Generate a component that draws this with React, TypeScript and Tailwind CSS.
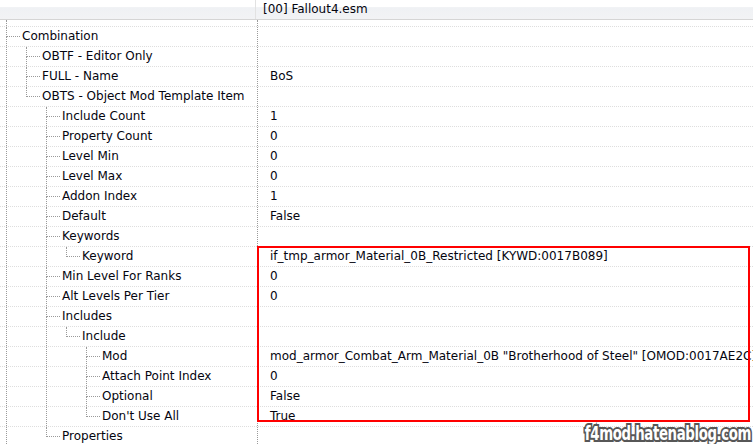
import React from "react";

type Node = {
  label: string;
  value?: string;
  depth: number;
  last: boolean;
};

const rows: Node[] = [
  { label: "Combination", depth: 0, last: false },
  { label: "OBTF - Editor Only", depth: 1, last: false },
  { label: "FULL - Name", value: "BoS", depth: 1, last: false },
  { label: "OBTS - Object Mod Template Item", depth: 1, last: true },
  { label: "Include Count", value: "1", depth: 2, last: false },
  { label: "Property Count", value: "0", depth: 2, last: false },
  { label: "Level Min", value: "0", depth: 2, last: false },
  { label: "Level Max", value: "0", depth: 2, last: false },
  { label: "Addon Index", value: "1", depth: 2, last: false },
  { label: "Default", value: "False", depth: 2, last: false },
  { label: "Keywords", depth: 2, last: false },
  { label: "Keyword", value: "if_tmp_armor_Material_0B_Restricted [KYWD:0017B089]", depth: 3, last: true },
  { label: "Min Level For Ranks", value: "0", depth: 2, last: false },
  { label: "Alt Levels Per Tier", value: "0", depth: 2, last: false },
  { label: "Includes", depth: 2, last: false },
  { label: "Include", depth: 3, last: true },
  { label: "Mod", value: 'mod_armor_Combat_Arm_Material_0B "Brotherhood of Steel" [OMOD:0017AE2C]', depth: 4, last: false },
  { label: "Attach Point Index", value: "0", depth: 4, last: false },
  { label: "Optional", value: "False", depth: 4, last: false },
  { label: "Don't Use All", value: "True", depth: 4, last: true },
  { label: "Properties", depth: 2, last: true },
];

// which guide columns keep a vertical line for a given row
function guides(index: number) {
  const open: boolean[] = [];
  const stack: Node[] = [];
  for (let i = 0; i <= index; i++) {
    const n = rows[i];
    stack.length = n.depth;
    stack[n.depth] = n;
  }
  for (let k = 0; k < rows[index].depth; k++) open.push(!stack[k].last);
  return open;
}

function GuideCell({ line }: { line: boolean }) {
  return (
    <div className="w-5 h-full shrink-0 pl-[6px]">
      {line && <div className="h-full border-l border-dotted border-[#9a9a9a]" />}
    </div>
  );
}

function ConnectorCell({ last }: { last: boolean }) {
  return (
    <div className="w-5 h-full shrink-0 pl-[6px] flex flex-col">
      <div className="h-[10px] border-l border-b border-dotted border-[#9a9a9a]" />
      {!last && <div className="flex-1 border-l border-dotted border-[#9a9a9a]" />}
    </div>
  );
}

function Row({ node, index }: { node: Node; index: number }) {
  const open = guides(index);
  return (
    <div className="flex h-5 border-t border-dotted border-[#dedede]">
      <div className="w-[257px] shrink-0 flex h-full items-stretch">
        {open.map((o, k) => (
          <GuideCell key={k} line={o} />
        ))}
        <ConnectorCell last={node.last} />
        <span className="pl-[2px] leading-[19px] whitespace-nowrap">{node.label}</span>
      </div>
      <div className="h-full border-l border-dotted border-[#9a9a9a]" />
      <div className="pl-3 leading-[19px] whitespace-nowrap">{node.value}</div>
    </div>
  );
}

export default function App() {
  return (
    <div
      className="relative w-[753px] h-[444px] overflow-hidden bg-white text-[12px] text-[#05050f]"
      style={{ fontFamily: "Tahoma, 'DejaVu Sans', 'Liberation Sans', sans-serif" }}
    >
      <div className="flex h-5 border-b border-[#d5d5d5] bg-[linear-gradient(#ffffff_0%,#ffffff_35%,#eff1f4_40%,#f2f3f5_100%)]">
        <div className="w-[256px] shrink-0 border-r border-[#e2e2e2]" />
        <div className="pl-[7px] leading-[19px]">[00] Fallout4.esm</div>
      </div>

      {/* tail of the row above Combination */}
      <div className="flex h-[6px]">
        <div className="w-[257px] shrink-0 pl-[6px]">
          <div className="h-full border-l border-dotted border-[#9a9a9a]" />
        </div>
        <div className="h-full border-l border-dotted border-[#9a9a9a]" />
      </div>

      <div className="relative">
        {rows.map((n, i) => (
          <Row key={i} node={n} index={i} />
        ))}
        <div className="absolute left-[257px] top-[220px] w-[493px] h-[176px] border-2 border-[#ff0000]" />
      </div>

      <div
        className="absolute right-[2px] bottom-[0px] origin-bottom-right scale-x-[0.78] text-[19px] leading-[22px] font-bold text-white tracking-[-0.5px] [-webkit-text-stroke:4px_#575757] [paint-order:stroke_fill]"
        style={{ fontFamily: "'DejaVu Sans Condensed', 'Liberation Sans Narrow', sans-serif" }}
      >
        f4mod.hatenablog.com
      </div>
    </div>
  );
}
